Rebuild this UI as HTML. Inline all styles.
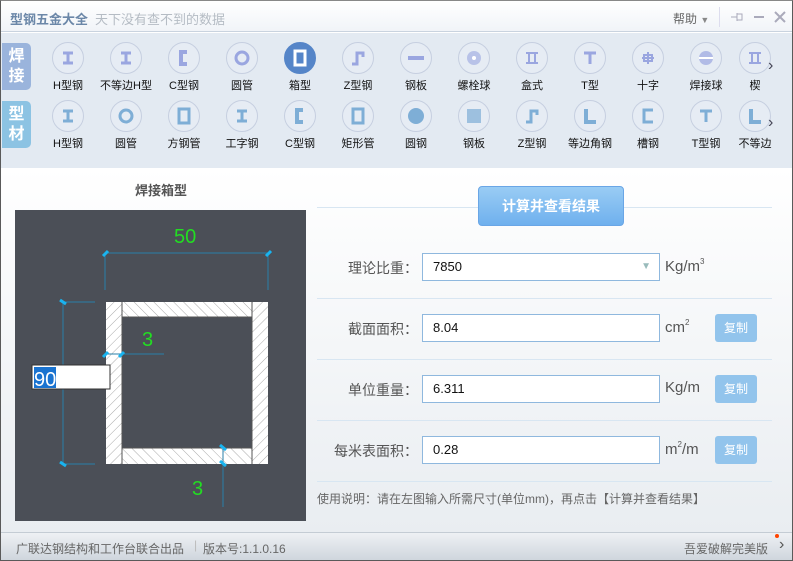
<!DOCTYPE html>
<html><head><meta charset="utf-8">
<style>
*{margin:0;padding:0;box-sizing:border-box}
body{width:793px;height:561px;overflow:hidden;font-family:"Liberation Sans","Noto Sans CJK SC",sans-serif;background:#fff;position:relative}
.win{position:absolute;left:0;top:0;width:793px;height:561px;border:1px solid #5a5a5a;border-top-color:#888}
.title{position:absolute;left:1px;top:1px;width:791px;height:31px;background:linear-gradient(#fff,#f1f4f8);border-bottom:1px solid #c9d3df}
.title .t1{position:absolute;left:9px;top:8px;font-size:13px;font-weight:bold;color:#6b87a8}
.title .t2{position:absolute;left:94px;top:8px;font-size:13px;color:#b5bcc4}
.help{position:absolute;left:672px;top:9px;font-size:12px;color:#666}
.tb{position:absolute;left:1px;top:33px;width:791px;height:135px;background:#e3eaf2}
.tab{position:absolute;left:1px;width:29px;height:47px;border-radius:0 5px 5px 0;color:#fff;font-size:16px;font-weight:bold;text-align:center;line-height:20px;padding-top:4px}
.it{position:absolute;width:58px;text-align:center;font-size:11px;color:#111}
.it .c{width:32px;height:32px;border-radius:50%;border:1px solid #c6cfe0;margin:0 auto;display:flex;align-items:center;justify-content:center;background:#e6ecf4}
.it .c.sel{background:#5585c8;border-color:#5585c8}
.it span{display:block;margin-top:3px;white-space:nowrap}
.arr{position:absolute;left:768px;color:#445;font-size:16px}
.main{position:absolute;left:1px;top:168px;width:791px;height:364px;background:linear-gradient(#fff,#e9edf1)}
.diag{position:absolute;left:15px;top:210px;width:291px;height:311px;background:#4b4f57}
.hl{position:absolute;left:317px;width:455px;height:1px;background:#d8e6f2}
.lbl{position:absolute;width:100px;left:318px;text-align:right;font-size:14px;color:#555}
.inp{position:absolute;left:422px;width:238px;height:28px;border:1px solid #8fb8de;background:#fff;font-size:13px;padding-left:10px;line-height:26px;color:#111}
.unit{position:absolute;left:665px;font-size:15px;color:#555}
.unit sup{font-size:8px;vertical-align:7px}
.cp{position:absolute;left:715px;width:42px;height:28px;background:#92c4ec;border-radius:3px;color:#fff;font-size:12px;text-align:center;line-height:28px}
.foot{position:absolute;left:1px;top:532px;width:791px;height:28px;background:linear-gradient(#eef1f4,#cfd6dd);border-top:1px solid #c4ccd4;font-size:12px;color:#666}
</style></head><body>
<div class="win"></div>
<div class="title"><span class="t1">型钢五金大全</span><span class="t2">天下没有查不到的数据</span>
<span class="help">帮助 <span style="font-size:9px;color:#888">▼</span></span>
<div style="position:absolute;left:718px;top:6px;width:1px;height:20px;background:#dde"></div>
<svg style="position:absolute;left:728px;top:9px" width="60" height="14"><path d="M2 7h6M8 3v8M8 4h5v6h-5" stroke="#aab" fill="none"/><path d="M25 7h10" stroke="#aab" stroke-width="2"/><path d="M46 2l10 10M56 2l-10 10" stroke="#aab" stroke-width="2"/></svg>
</div>
<div class="tb">
<div class="tab" style="top:10px;background:#9ab4dc">焊<br>接</div>
<div class="tab" style="top:68px;background:#8cc3e3">型<br>材</div>
</div>
<div id="icons"></div>
<div class="arr" style="top:57px">&#x203A;</div>
<div class="arr" style="top:114px">&#x203A;</div>
<div class="main"></div>
<div style="position:absolute;left:0;top:180px;width:322px;text-align:center;font-size:13px;font-weight:bold;color:#555">焊接箱型</div>
<div class="diag"></div>
<svg style="position:absolute;left:0;top:0" width="320" height="530">
<defs>
<pattern id="h" width="7" height="7" patternUnits="userSpaceOnUse" patternTransform="rotate(45)"><rect width="7" height="7" fill="#fff"/><line x1="0" y1="0" x2="0" y2="7" stroke="#aaa" stroke-width="1"/></pattern>
<pattern id="h2" width="7" height="7" patternUnits="userSpaceOnUse" patternTransform="rotate(-45)"><rect width="7" height="7" fill="#fff"/><line x1="0" y1="0" x2="0" y2="7" stroke="#aaa" stroke-width="1"/></pattern>
</defs>
<rect x="106" y="302" width="16" height="162" fill="url(#h)"/>
<rect x="252" y="302" width="16" height="162" fill="url(#h)"/>
<rect x="122" y="302" width="130" height="15" fill="url(#h2)"/>
<rect x="122" y="448" width="130" height="16" fill="url(#h2)"/>
<path d="M122 302v162M252 302v162M122 317h130M122 448h130" stroke="#555" stroke-width="1"/>
<g stroke="#2a7fa8" stroke-width="1" fill="none">
<path d="M105 253h164M105 253v37M268 253v37M63 302v162M63 302h32M63 464h32M106 354h58M223 448v59"/>
</g>
<g stroke="#19b4f0" stroke-width="3">
<path d="M103 256l5-5M266 256l5-5M60 300l6 4M60 462l6 4M103 357l5-5M119 357l5-5M220 445l6 5M220 461l6 5"/>
</g>
<g fill="#22dd22" font-family="Liberation Sans,sans-serif" font-size="20">
<text x="174" y="243">50</text><text x="142" y="346">3</text><text x="192" y="495">3</text>
</g>
<rect x="32" y="365" width="78" height="24" fill="#fff" stroke="#333"/>
<rect x="34" y="367" width="22" height="21" fill="#1a73d0"/>
<text x="34" y="386" fill="#fff" font-family="Liberation Sans,sans-serif" font-size="20">90</text>
</svg>
<div class="hl" style="top:207px"></div>
<div style="position:absolute;left:478px;top:186px;width:146px;height:40px;border-radius:4px;background:linear-gradient(#99ccf4,#6fb0ee);border:1px solid #6aa6e6;color:#fff;font-weight:bold;font-size:14px;text-align:center;line-height:38px">计算并查看结果</div>
<div class="lbl" style="top:258px">理论比重：</div>
<div class="inp" style="top:253px">7850<span style="position:absolute;right:8px;top:0;color:#9bb;font-size:10px">▼</span></div>
<div class="unit" style="top:257px">Kg/m<sup>3</sup></div>
<div class="hl" style="top:298px"></div>
<div class="lbl" style="top:319px">截面面积：</div>
<div class="inp" style="top:314px">8.04</div>
<div class="unit" style="top:318px">cm<sup>2</sup></div>
<div class="cp" style="top:314px">复制</div>
<div class="hl" style="top:359px"></div>
<div class="lbl" style="top:380px">单位重量：</div>
<div class="inp" style="top:375px">6.311</div>
<div class="unit" style="top:379px">Kg/m</div>
<div class="cp" style="top:375px">复制</div>
<div class="hl" style="top:420px"></div>
<div class="lbl" style="top:441px">每米表面积：</div>
<div class="inp" style="top:436px">0.28</div>
<div class="unit" style="top:440px">m<sup>2</sup>/m</div>
<div class="cp" style="top:436px">复制</div>
<div class="hl" style="top:481px"></div>
<div style="position:absolute;left:317px;top:490px;font-size:12px;color:#666">使用说明：请在左图输入所需尺寸(单位mm)，再点击【计算并查看结果】</div>
<div class="foot"><span style="position:absolute;left:15px;top:7px">广联达钢结构和工作台联合出品</span><span style="position:absolute;left:193px;top:5px;color:#bbb">|</span><span style="position:absolute;left:202px;top:7px">版本号:1.1.0.16</span>
<span style="position:absolute;left:683px;top:7px">吾爱破解完美版</span><span style="position:absolute;left:774px;top:1px;width:4px;height:4px;border-radius:50%;background:#f40"></span><span style="position:absolute;left:778px;top:3px;font-size:16px;color:#555">&#x203A;</span></div>
<script>
var P='#9aa6e0',Q='#7eaed6';
function ic(n,c){var s={
I:'<path d="M4 4h10M9 4v10M4 14h10" stroke="'+c+'" stroke-width="3"/>',
C:'<path d="M12 3H6v12h6" stroke="'+c+'" stroke-width="4" fill="none"/>',
O:'<circle cx="9" cy="9" r="6" stroke="'+c+'" stroke-width="3" fill="none"/>',
B:'<rect x="4" y="2" width="10" height="14" stroke="'+c+'" stroke-width="3" fill="none"/>',
Z:'<path d="M3 15h5V4h6v4" stroke="'+c+'" stroke-width="3" fill="none"/>',
P:'<rect x="1" y="7" width="16" height="4" fill="'+c+'"/>',
S:'<circle cx="9" cy="9" r="7" fill="'+c+'" opacity=".6"/><circle cx="9" cy="9" r="2" fill="#fff"/>',
H:'<path d="M3 4h12M6 4v10M12 4v10M3 14h12" stroke="'+c+'" stroke-width="2"/>',
T:'<path d="M3 4h12M9 4v11" stroke="'+c+'" stroke-width="3"/>',
X:'<path d="M3 9h12M9 3v12M5 6h8v6H5z" stroke="'+c+'" stroke-width="2" fill="none"/>',
W:'<circle cx="9" cy="9" r="7" fill="'+c+'" opacity=".7"/><path d="M2 9h14" stroke="#fff" stroke-width="2"/>',
D:'<circle cx="9" cy="9" r="8" fill="'+c+'"/>',
G:'<rect x="2" y="2" width="14" height="14" fill="'+c+'" opacity=".7"/>',
L:'<path d="M5 2v13h10" stroke="'+c+'" stroke-width="4" fill="none"/>',
U:'<path d="M14 3H5v12h9" stroke="'+c+'" stroke-width="3" fill="none"/>'}[n];
return '<svg width="18" height="18">'+s+'</svg>';}
var r1=[['I','H型钢'],['I','不等边H型'],['C','C型钢'],['O','圆管'],['B','箱型'],['Z','Z型钢'],['P','钢板'],['S','螺栓球'],['H','盒式'],['T','T型'],['X','十字'],['W','焊接球'],['H','楔']];
var r2=[['I','H型钢'],['O','圆管'],['B','方钢管'],['I','工字钢'],['C','C型钢'],['B','矩形管'],['D','圆钢'],['G','钢板'],['Z','Z型钢'],['L','等边角钢'],['U','槽钢'],['T','T型钢'],['L','不等边']];
var h='';
function row(r,y,c){r.forEach(function(e,i){var x=39+58*i,sel=(y<60&&i==4);
h+='<div class="it" style="left:'+x+'px;top:'+y+'px;'+(i==12?'width:40px;overflow:hidden;':'')+'"><div class="c'+(sel?' sel':'')+'">'+ic(e[0],sel?'#fff':c)+'</div><span>'+e[1]+'</span></div>';});}
row(r1,42,P);row(r2,100,Q);
document.getElementById('icons').innerHTML=h;
</script>
</body></html>
